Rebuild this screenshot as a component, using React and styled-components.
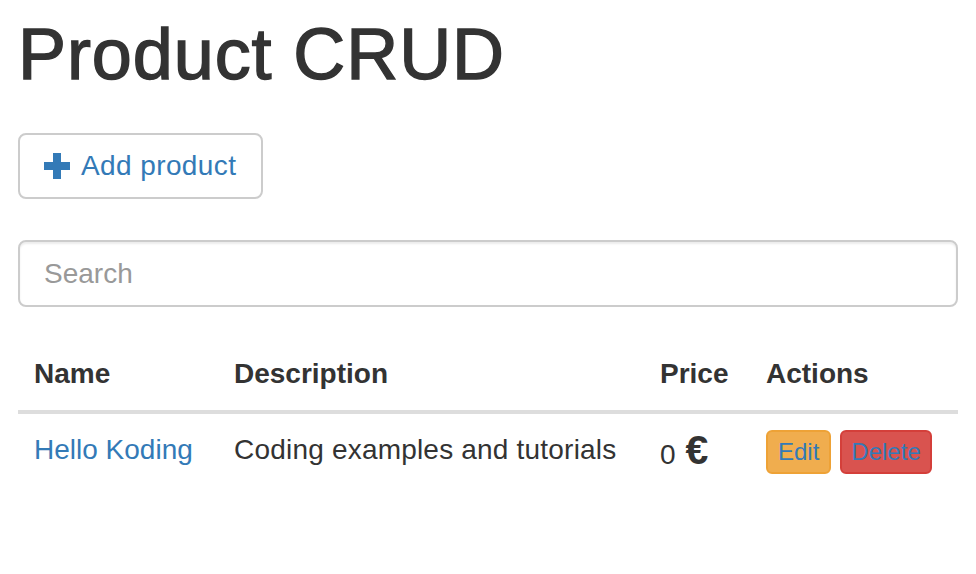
import React from "react";
import styled, { createGlobalStyle } from "styled-components";

const GlobalStyle = createGlobalStyle`
  html, body { margin: 0; padding: 0; background: #fff; }
  body {
    font-family: "Liberation Sans", Arial, Helvetica, sans-serif;
    font-size: 28px;
    color: #333;
  }
  * { box-sizing: border-box; }
`;

const Page = styled.div`
  padding: 15px 18px 0 18px;
  width: 976px;
`;

const Title = styled.h1`
  margin: 0;
  font-size: 72px;
  font-weight: 500;
  line-height: 79px;
  color: #333;
  letter-spacing: 0.9px;
  -webkit-text-stroke: 1.4px #333;
`;

const Toolbar = styled.div`
  margin-top: 39px;
  display: flex;
`;

const AddButton = styled.button`
  display: inline-flex;
  align-items: center;
  gap: 11px;
  height: 66px;
  padding: 0 25px 0 24px;
  background: #fff;
  border: 2px solid #ccc;
  border-radius: 8px;
  font-family: inherit;
  font-size: 28px;
  color: #337ab7;
  cursor: pointer;
  letter-spacing: 0.4px;
`;

const SearchInput = styled.input`
  display: block;
  margin-top: 41px;
  width: 100%;
  height: 67px;
  padding: 0 24px;
  border: 2px solid #ccc;
  border-radius: 8px;
  box-shadow: inset 0 2px 2px rgba(0, 0, 0, 0.075);
  font-family: inherit;
  font-size: 28px;
  color: #555;
  outline: none;
  &::placeholder { color: #999; }
`;

const Table = styled.table`
  margin-top: 31px;
  width: 100%;
  border-collapse: collapse;
`;

const Th = styled.th`
  text-align: left;
  font-weight: bold;
  font-size: 28px;
  line-height: 40px;
  padding: 16px 16px;
  border-bottom: 4px solid #ddd;
  width: ${(p) => p.$w || "auto"};
`;

const Td = styled.td`
  font-size: 28px;
  line-height: 40px;
  padding: 16px 16px;
  vertical-align: top;
  white-space: nowrap;
  letter-spacing: ${(p) => p.$spacing || "0"};
`;

const NameLink = styled.a`
  color: #337ab7;
  text-decoration: none;
`;

const Euro = styled.span`
  font-weight: bold;
  font-size: 41px;
  margin-left: 10px;
  letter-spacing: 0;
`;

const Actions = styled.div`
  display: flex;
  gap: 9px;
`;

const SmallButton = styled.button`
  height: 44px;
  padding: 0 ${(p) => (p.$variant === "danger" ? "9px" : "10px")};
  border-radius: 6px;
  border: 2px solid ${(p) => (p.$variant === "danger" ? "#d43f3a" : "#eea236")};
  background: ${(p) => (p.$variant === "danger" ? "#d9534f" : "#f0ad4e")};
  color: #337ab7;
  font-family: inherit;
  font-size: 24px;
  line-height: 36px;
  cursor: pointer;
`;

const PlusIcon = () => (
  <svg width="26" height="26" viewBox="0 0 26 26">
    <path d="M9 0h8v9h9v8h-9v9H9v-9H0V9h9z" fill="#337ab7" />
  </svg>
);

export default function App() {
  return (
    <>
      <GlobalStyle />
      <Page>
        <Title>Product CRUD</Title>
        <Toolbar>
          <AddButton>
            <PlusIcon />
            Add product
          </AddButton>
        </Toolbar>
        <SearchInput placeholder="Search" />
        <Table>
          <thead>
            <tr>
              <Th $w="200px">Name</Th>
              <Th $w="426px">Description</Th>
              <Th $w="106px">Price</Th>
              <Th>Actions</Th>
            </tr>
          </thead>
          <tbody>
            <tr>
              <Td>
                <NameLink href="#">Hello Koding</NameLink>
              </Td>
              <Td $spacing="0.2px">Coding examples and tutorials</Td>
              <Td>
                0<Euro>€</Euro>
              </Td>
              <Td>
                <Actions>
                  <SmallButton>Edit</SmallButton>
                  <SmallButton $variant="danger">Delete</SmallButton>
                </Actions>
              </Td>
            </tr>
          </tbody>
        </Table>
      </Page>
    </>
  );
}
